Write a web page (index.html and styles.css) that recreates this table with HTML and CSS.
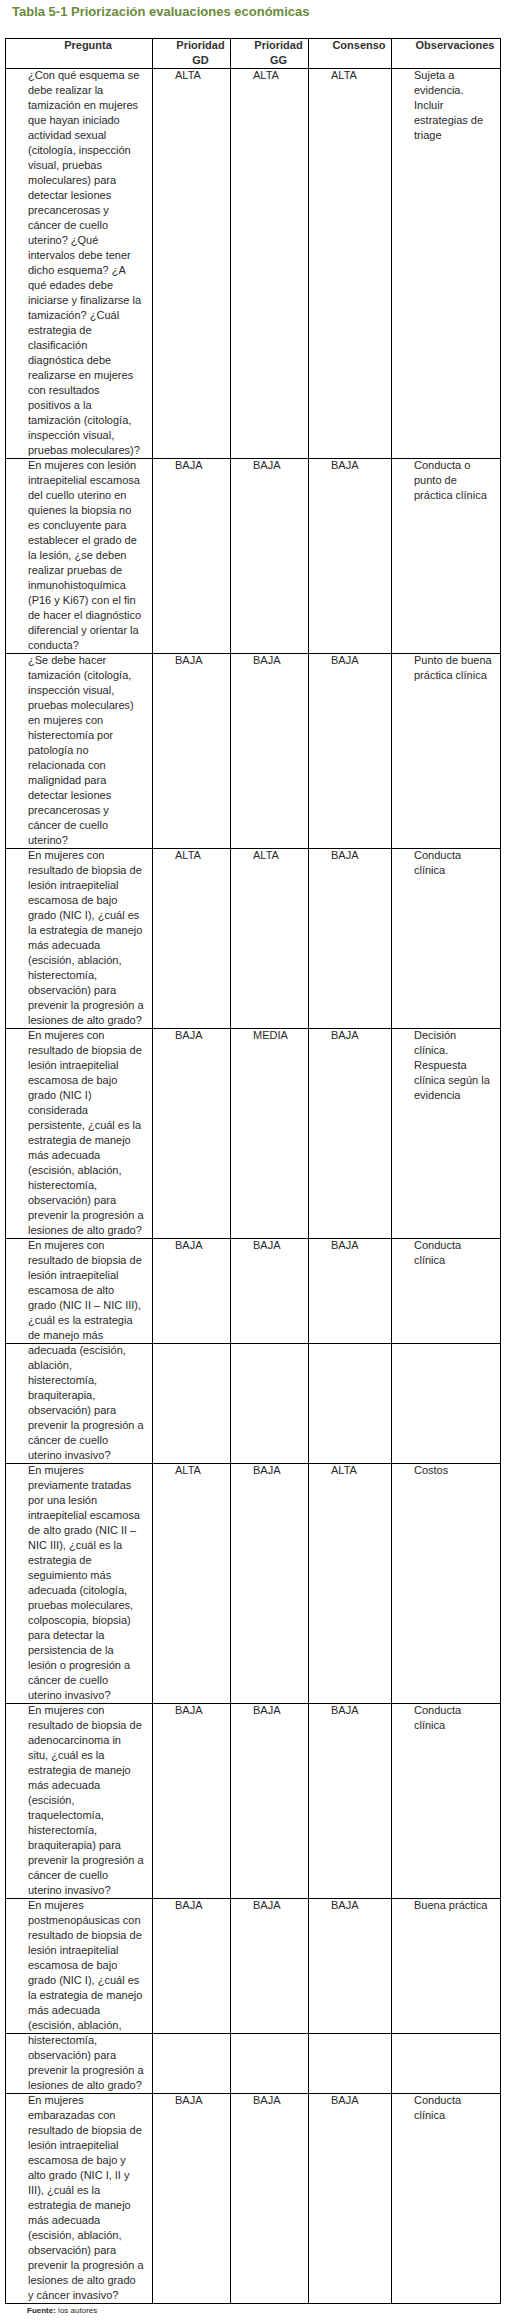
FILE: index.html
```html
<!DOCTYPE html>
<html lang="es">
<head>
<meta charset="utf-8">
<title>Tabla 5-1 Priorización evaluaciones económicas</title>
<link rel="stylesheet" href="styles.css">
</head>
<body>
<h1 class="title">Tabla 5-1 Priorización evaluaciones económicas</h1>
<table class="grid">
  <colgroup>
    <col class="c-q"><col class="c-p"><col class="c-p"><col class="c-c"><col class="c-o">
  </colgroup>
  <thead>
    <tr>
      <th>Pregunta</th>
      <th>Prioridad<br>GD</th>
      <th>Prioridad<br>GG</th>
      <th>Consenso</th>
      <th>Observaciones</th>
    </tr>
  </thead>
  <tbody>
    <tr>
      <td>¿Con qué esquema se<br>debe realizar la<br>tamización en mujeres<br>que hayan iniciado<br>actividad sexual<br>(citología, inspección<br>visual, pruebas<br>moleculares) para<br>detectar lesiones<br>precancerosas y<br>cáncer de cuello<br>uterino? ¿Qué<br>intervalos debe tener<br>dicho esquema? ¿A<br>qué edades debe<br>iniciarse y finalizarse la<br>tamización? ¿Cuál<br>estrategia de<br>clasificación<br>diagnóstica debe<br>realizarse en mujeres<br>con resultados<br>positivos a la<br>tamización (citología,<br>inspección visual,<br>pruebas moleculares)?</td>
      <td>ALTA</td><td>ALTA</td><td>ALTA</td>
      <td>Sujeta a<br>evidencia.<br>Incluir<br>estrategias de<br>triage</td>
    </tr>
    <tr>
      <td>En mujeres con lesión<br>intraepitelial escamosa<br>del cuello uterino en<br>quienes la biopsia no<br>es concluyente para<br>establecer el grado de<br>la lesión, ¿se deben<br>realizar pruebas de<br>inmunohistoquímica<br>(P16 y Ki67) con el fin<br>de hacer el diagnóstico<br>diferencial y orientar la<br>conducta?</td>
      <td>BAJA</td><td>BAJA</td><td>BAJA</td>
      <td>Conducta o<br>punto de<br>práctica clínica</td>
    </tr>
    <tr>
      <td>¿Se debe hacer<br>tamización (citología,<br>inspección visual,<br>pruebas moleculares)<br>en mujeres con<br>histerectomía por<br>patología no<br>relacionada con<br>malignidad para<br>detectar lesiones<br>precancerosas y<br>cáncer de cuello<br>uterino?</td>
      <td>BAJA</td><td>BAJA</td><td>BAJA</td>
      <td>Punto de buena<br>práctica clínica</td>
    </tr>
    <tr>
      <td>En mujeres con<br>resultado de biopsia de<br>lesión intraepitelial<br>escamosa de bajo<br>grado (NIC I), ¿cuál es<br>la estrategia de manejo<br>más adecuada<br>(escisión, ablación,<br>histerectomía,<br>observación) para<br>prevenir la progresión a<br>lesiones de alto grado?</td>
      <td>ALTA</td><td>ALTA</td><td>BAJA</td>
      <td>Conducta<br>clínica</td>
    </tr>
    <tr>
      <td>En mujeres con<br>resultado de biopsia de<br>lesión intraepitelial<br>escamosa de bajo<br>grado (NIC I)<br>considerada<br>persistente, ¿cuál es la<br>estrategia de manejo<br>más adecuada<br>(escisión, ablación,<br>histerectomía,<br>observación) para<br>prevenir la progresión a<br>lesiones de alto grado?</td>
      <td>BAJA</td><td>MEDIA</td><td>BAJA</td>
      <td>Decisión<br>clínica.<br>Respuesta<br>clínica según la<br>evidencia</td>
    </tr>
    <tr>
      <td>En mujeres con<br>resultado de biopsia de<br>lesión intraepitelial<br>escamosa de alto<br>grado (NIC II – NIC III),<br>¿cuál es la estrategia<br>de manejo más</td>
      <td>BAJA</td><td>BAJA</td><td>BAJA</td>
      <td>Conducta<br>clínica</td>
    </tr>
    <tr>
      <td>adecuada (escisión,<br>ablación,<br>histerectomía,<br>braquiterapia,<br>observación) para<br>prevenir la progresión a<br>cáncer de cuello<br>uterino invasivo?</td>
      <td></td><td></td><td></td><td></td>
    </tr>
    <tr>
      <td>En mujeres<br>previamente tratadas<br>por una lesión<br>intraepitelial escamosa<br>de alto grado (NIC II –<br>NIC III), ¿cuál es la<br>estrategia de<br>seguimiento más<br>adecuada (citología,<br>pruebas moleculares,<br>colposcopia, biopsia)<br>para detectar la<br>persistencia de la<br>lesión o progresión a<br>cáncer de cuello<br>uterino invasivo?</td>
      <td>ALTA</td><td>BAJA</td><td>ALTA</td>
      <td>Costos</td>
    </tr>
    <tr>
      <td>En mujeres con<br>resultado de biopsia de<br>adenocarcinoma in<br>situ, ¿cuál es la<br>estrategia de manejo<br>más adecuada<br>(escisión,<br>traquelectomía,<br>histerectomía,<br>braquiterapia) para<br>prevenir la progresión a<br>cáncer de cuello<br>uterino invasivo?</td>
      <td>BAJA</td><td>BAJA</td><td>BAJA</td>
      <td>Conducta<br>clínica</td>
    </tr>
    <tr>
      <td>En mujeres<br>postmenopáusicas con<br>resultado de biopsia de<br>lesión intraepitelial<br>escamosa de bajo<br>grado (NIC I), ¿cuál es<br>la estrategia de manejo<br>más adecuada<br>(escisión, ablación,</td>
      <td>BAJA</td><td>BAJA</td><td>BAJA</td>
      <td>Buena práctica</td>
    </tr>
    <tr>
      <td>histerectomía,<br>observación) para<br>prevenir la progresión a<br>lesiones de alto grado?</td>
      <td></td><td></td><td></td><td></td>
    </tr>
    <tr>
      <td>En mujeres<br>embarazadas con<br>resultado de biopsia de<br>lesión intraepitelial<br>escamosa de bajo y<br>alto grado (NIC I, II y<br>III), ¿cuál es la<br>estrategia de manejo<br>más adecuada<br>(escisión, ablación,<br>observación) para<br>prevenir la progresión a<br>lesiones de alto grado<br>y cáncer invasivo?</td>
      <td>BAJA</td><td>BAJA</td><td>BAJA</td>
      <td>Conducta<br>clínica</td>
    </tr>
  </tbody>
</table>
<p class="source"><b>Fuente:</b> los autores</p>
</body>
</html>
```

FILE: styles.css
```css
html, body {
  margin: 0;
  padding: 0;
  background: #ffffff;
}

body {
  font-family: "Liberation Sans", Arial, sans-serif;
  color: #2a2a2a;
}

.title {
  margin: 0 0 19px 12px;
  padding-top: 4px;
  font-size: 13px;
  line-height: 15px;
  font-weight: bold;
  color: #6b8b3c;
}

.grid {
  margin-left: 5px;
  border-collapse: collapse;
  table-layout: fixed;
  width: 496px;
  font-size: 11px;
  line-height: 15px;
}

.c-q { width: 147px; }
.c-p { width: 78px; }
.c-c { width: 83px; }
.c-o { width: 109px; }

.grid th,
.grid td {
  border: 1px solid #000;
  padding: 0 4px 0 22px;
  vertical-align: top;
  text-align: left;
  white-space: nowrap;
  overflow: hidden;
}

/* pull the first line up so it overlaps the rule, as in the source document */
.grid th::before,
.grid td::before {
  content: "";
  display: block;
  margin-top: -1px;
}

.grid th {
  font-weight: bold;
  text-align: center;
  color: #333;
}

.source {
  margin: 2px 0 0 27px;
  font-size: 8px;
  line-height: 10px;
  color: #2a2a2a;
}
```
